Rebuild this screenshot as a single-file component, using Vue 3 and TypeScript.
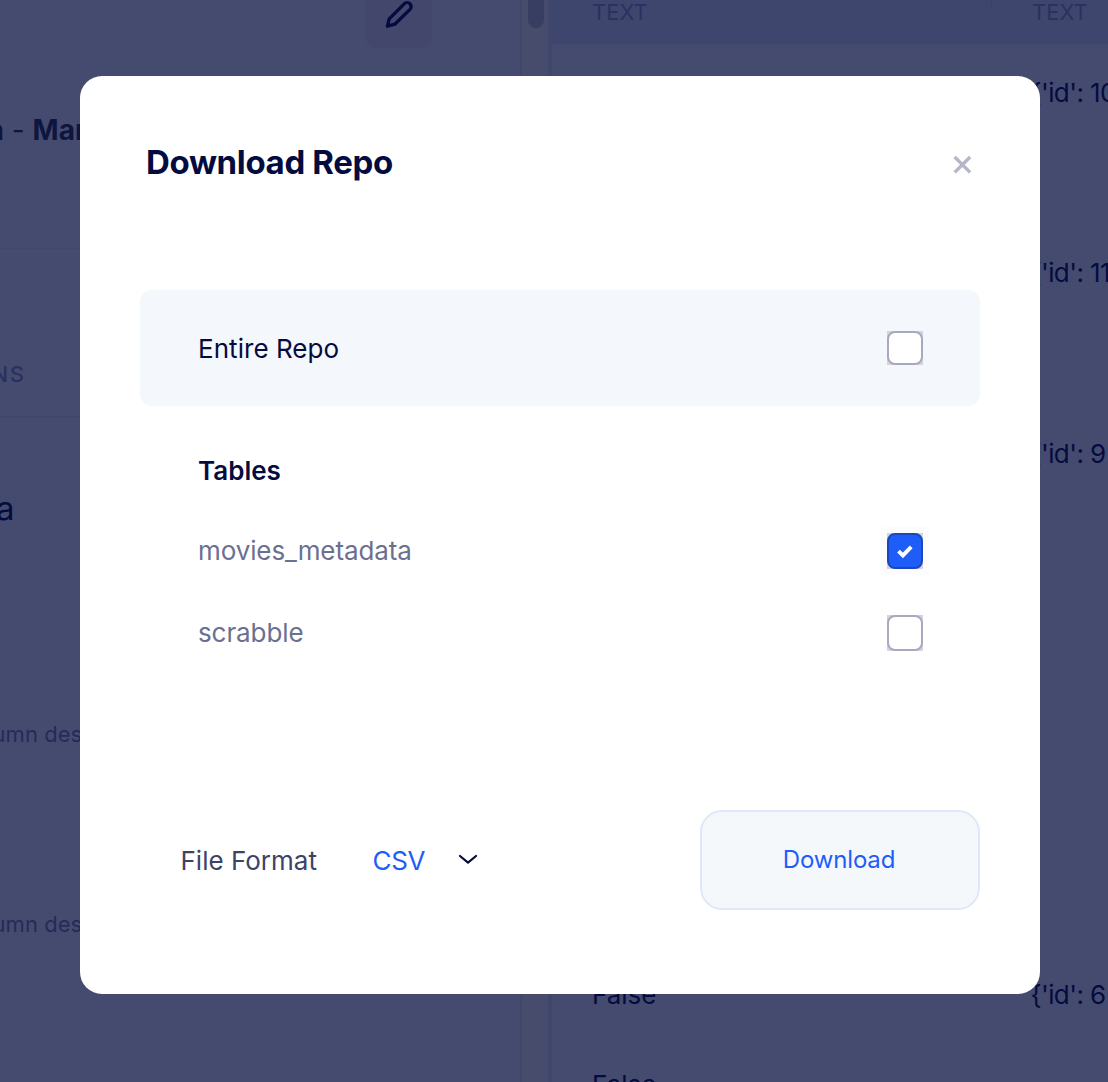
<script setup lang="ts">
import { ref } from 'vue'

interface RepoTable {
  name: string
  checked: boolean
}

const entireRepo = ref(false)
const tables = ref<RepoTable[]>([
  { name: 'movies_metadata', checked: true },
  { name: 'scrabble', checked: false },
])
const format = ref('CSV')

const rows: { flag: string; value: string }[] = [
  { flag: '', value: "{'id': 10" },
  { flag: '', value: '' },
  { flag: '', value: "{'id': 11" },
  { flag: '', value: '' },
  { flag: '', value: "{'id': 9" },
  { flag: '', value: '' },
  { flag: '', value: '' },
  { flag: '', value: '' },
  { flag: '', value: '' },
  { flag: '', value: '' },
  { flag: 'False', value: "{'id': 6" },
  { flag: 'False', value: '' },
]
</script>

<template>
  <div class="page">
    <div class="backdrop">
      <section class="side">
        <div class="side-top">
          <div class="edit">
            <svg width="30" height="30" viewBox="0 0 30 30" fill="none">
              <path d="M3.4 26.2 L5.2 18.8 L20.2 3.8 A3.9 3.9 0 0 1 26 9.4 L10.8 24.2 Z" stroke="#040c3f" stroke-width="3.3" stroke-linejoin="round" />
            </svg>
          </div>
        </div>
        <div class="crumb"><b>n</b> - <b>Mar</b></div>
        <div class="tabs"><span class="tab-first">NS</span><span>D</span></div>
        <div class="heading">a</div>
        <div class="desc">umn des</div>
        <div class="desc">umn des</div>
      </section>
      <div class="track"><div class="thumb"></div></div>
      <section class="grid">
        <div class="grid-head">
          <div class="col-a">TEXT<i class="sep"></i></div>
          <div class="col-b">TEXT</div>
        </div>
        <div v-for="(row, i) in rows" :key="i" class="grid-row">
          <div class="col-a">{{ row.flag }}</div>
          <div class="col-b value">{{ row.value }}</div>
        </div>
      </section>
    </div>

    <div class="overlay">
      <div class="modal" role="dialog">
        <header class="modal-head">
          <h1>Download Repo</h1>
          <svg class="close" width="20" height="20" viewBox="0 0 20 20">
            <path d="M1.7 2 L17.1 17.4 M17.1 2 L1.7 17.4" stroke="#b5b6c8" stroke-width="3.3" fill="none" />
          </svg>
        </header>
        <div class="entire" @click="entireRepo = !entireRepo">
          <span>Entire Repo</span>
          <span class="box short" :class="{ on: entireRepo }"><i></i></span>
        </div>
        <h2>Tables</h2>
        <div v-for="t in tables" :key="t.name" class="table-row" @click="t.checked = !t.checked">
          <span>{{ t.name }}</span>
          <span class="box" :class="{ on: t.checked }">
            <i>
              <svg v-if="t.checked" width="18" height="16" viewBox="0 0 18 16">
                <path d="M2.5 8.2 L6.9 12.4 L15.2 3.8" stroke="#fff" stroke-width="3.9" fill="none" />
              </svg>
            </i>
          </span>
        </div>
        <footer class="modal-foot">
          <span class="label">File Format</span>
          <span class="format">{{ format }}</span>
          <svg class="chev" width="22" height="14" viewBox="0 0 22 14">
            <path d="M3 4 L11 10.6 L19 4" stroke="#040c3f" stroke-width="2.2" fill="none" stroke-linecap="round" stroke-linejoin="round" />
          </svg>
          <button class="download">Download</button>
        </footer>
      </div>
    </div>
  </div>
</template>

<style>
body {
  margin: 0;
  overflow: hidden;
}
</style>

<style scoped>
.page {
  position: relative;
  width: 1108px;
  height: 1082px;
  overflow: hidden;
  font-family: Inter, "Liberation Sans", sans-serif;
  color: #040c3f;
  white-space: nowrap;
}
.backdrop {
  display: flex;
  width: 1108px;
  height: 1082px;
  background: #454b6e;
}
.side {
  box-sizing: border-box;
  width: 522px;
  border-right: 2px solid #40476c;
  overflow: hidden;
}
.side-top {
  display: flex;
  height: 110px;
  padding-left: 366px;
}
.edit {
  box-sizing: border-box;
  width: 66px;
  height: 48px;
  padding-left: 18px;
  border-radius: 0 0 10px 10px;
  background: #42476b;
}
.edit svg {
  display: block;
}
.crumb {
  box-sizing: border-box;
  height: 139px;
  text-indent: -13.5px;
  font-size: 28px;
  line-height: 40px;
  color: #0e153f;
  border-bottom: 1px solid #42486c;
}
.tabs {
  box-sizing: border-box;
  display: flex;
  height: 169px;
  padding-top: 110px;
  font-size: 22px;
  font-weight: 500;
  line-height: 30px;
  letter-spacing: 1.5px;
  color: #2a3160;
  border-bottom: 2px solid #3f466f;
}
.tab-first {
  width: 86px;
  margin-left: -8.5px;
}
.tab-first + span {
  margin-left: 1px;
}
.heading {
  box-sizing: border-box;
  height: 224px;
  padding-top: 70px;
  margin-left: -4px;
  font-size: 33px;
  line-height: 40px;
}
.heading + .desc {
  margin-top: 75px;
}
.desc {
  height: 190px;
  margin-left: -7.5px;
  font-size: 22px;
  line-height: 34px;
  letter-spacing: 0.05px;
  color: #242b58;
}
.track {
  width: 26px;
  background: #474c6c;
  border-right: 4px solid #40476d;
}
.thumb {
  width: 16px;
  height: 28px;
  margin-left: 6px;
  border-radius: 0 0 8px 8px;
  background: #383d62;
}
.grid {
  flex: 1;
  overflow: hidden;
}
.grid-head {
  display: flex;
  height: 44px;
  margin-bottom: 4px;
  background: #3f466d;
  font-size: 22px;
  line-height: 24px;
  color: #2a3160;
}
.col-a {
  display: flex;
  justify-content: space-between;
  flex: none;
  box-sizing: border-box;
  width: 440px;
  padding-left: 40px;
}
.sep {
  width: 1px;
  height: 8px;
  background: #3a416a;
}
.col-b {
  padding-left: 40px;
}
.value {
  padding-left: 38.5px;
  letter-spacing: -0.6px;
}
.grid-row {
  display: flex;
  height: 90.2px;
  font-size: 26px;
  line-height: 90px;
}
.overlay {
  position: absolute;
  inset: 0;
  padding: 76px 80px 0;
}
.modal {
  box-sizing: border-box;
  width: 960px;
  height: 918px;
  padding: 64px 60px 0;
  border-radius: 22px;
  background: #fff;
}
.modal-head {
  display: flex;
  justify-content: space-between;
  height: 150px;
  padding: 0 7px 0 6px;
}
h1 {
  margin: 0;
  font-size: 33px;
  font-weight: 700;
  line-height: 45px;
  letter-spacing: -0.35px;
}
.close {
  margin-top: 15px;
}
.entire {
  box-sizing: border-box;
  display: flex;
  align-items: center;
  justify-content: space-between;
  height: 116px;
  padding: 0 57px 0 58px;
  border-radius: 12px;
  background: #f4f7fb;
  font-size: 26px;
  letter-spacing: 0.05px;
}
h2 {
  margin: 45px 0 18px 58px;
  font-size: 26px;
  font-weight: 600;
  line-height: 40px;
}
.table-row {
  display: flex;
  align-items: center;
  justify-content: space-between;
  height: 82px;
  margin: 0 57px 0 58px;
  font-size: 26px;
  letter-spacing: -0.1px;
  color: #6b7090;
}
.box {
  width: 36px;
  height: 36px;
  margin-top: 1px;
  background: #d4d4df;
}
.box.short {
  height: 34px;
  margin-top: -1px;
}
.box i {
  box-sizing: border-box;
  display: flex;
  align-items: center;
  justify-content: center;
  width: 100%;
  height: 100%;
  border: 2px solid #a8a9bf;
  border-radius: 8px;
  background: #fff;
}
.box.on {
  box-shadow: 0 0 0 6px #fcfcfd;
}
.box.on i {
  border-color: #1a47c0;
  background: #1e5df8;
}
.modal-foot {
  display: flex;
  align-items: center;
  height: 100px;
  margin-top: 137px;
  font-size: 26px;
}
.label {
  box-sizing: border-box;
  width: 232.5px;
  padding-left: 40.5px;
  color: #3d4368;
}
.format {
  width: 84.5px;
  letter-spacing: -0.3px;
  color: #1e5df8;
}
.chev {
  margin-top: -2px;
}
.download {
  box-sizing: border-box;
  width: 280px;
  height: 100px;
  margin-left: auto;
  padding: 0 2px 2px 0;
  border: 2px solid #dfe8fa;
  border-radius: 22px;
  background: #f4f8fb;
  font: 400 24px Inter, "Liberation Sans", sans-serif;
  letter-spacing: -0.15px;
  color: #1e5df8;
}
</style>
